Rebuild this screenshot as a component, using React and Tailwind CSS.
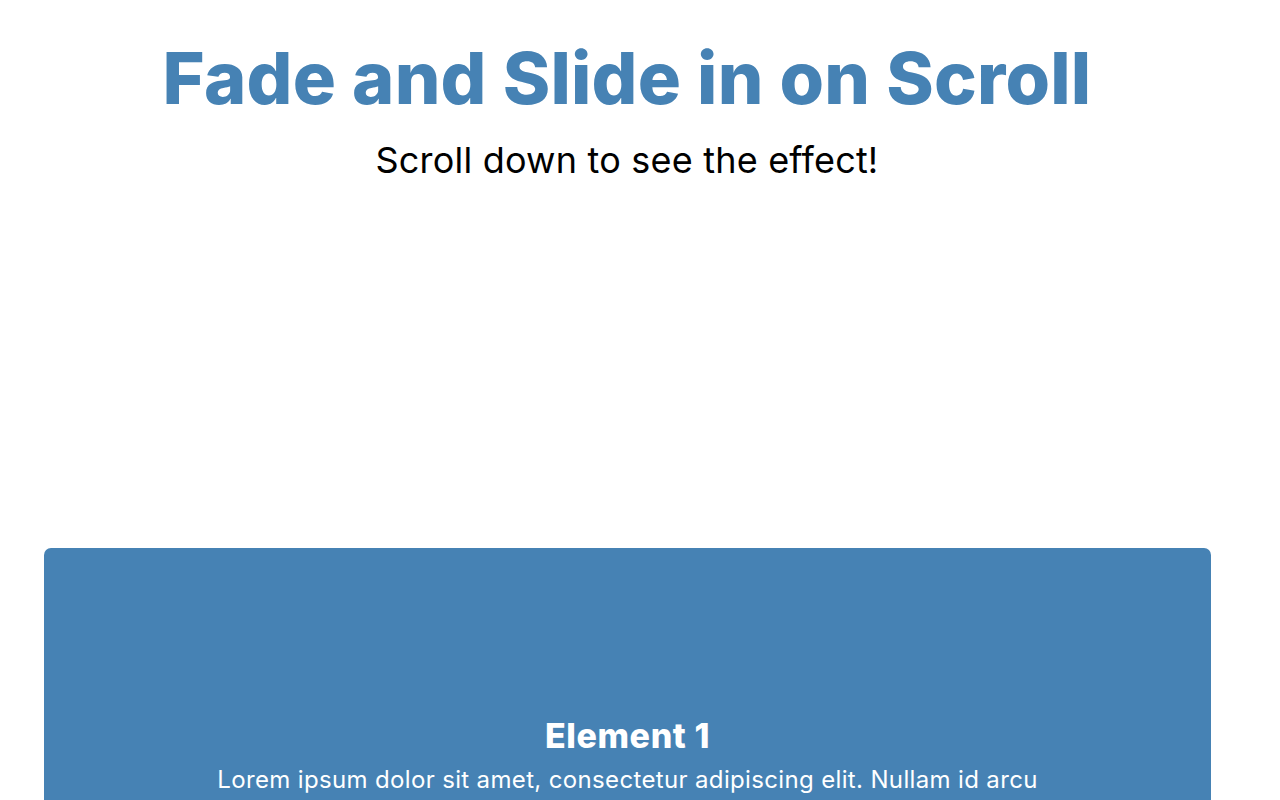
export default function App() {
  return (
    <main
      className="min-h-screen bg-white text-black"
      style={{ fontFamily: "Inter, 'Noto Sans', sans-serif" }}
    >
      {/* ===== HEADER ===== */}
      <header className="flex flex-col items-center pr-[26px] pt-[38px]">
        <h1 className="text-[72px] font-extrabold leading-[80px] tracking-[0.2px] text-[#4682b4]">
          Fade and Slide in on Scroll
        </h1>
        <p className="mt-[20px] text-[36px] leading-[44px] tracking-[0.2px]">
          Scroll down to see the effect!
        </p>
      </header>

      {/* ===== ELEMENTS ===== */}
      <section className="mt-[366px] flex flex-col gap-8 pl-[44px] pr-[69px]">
        <div className="h-[400px] rounded-[7px] bg-[#4682b4] px-10 pt-[168px] text-center text-white">
          <h2 className="text-[34px] font-extrabold leading-[40px] tracking-[0.6px]">Element 1</h2>
          <p className="mt-[6px] text-[24px] leading-[36px] tracking-[0.35px]">
            Lorem ipsum dolor sit amet, consectetur adipiscing elit. Nullam id arcu
          </p>
        </div>
      </section>
    </main>
  );
}
